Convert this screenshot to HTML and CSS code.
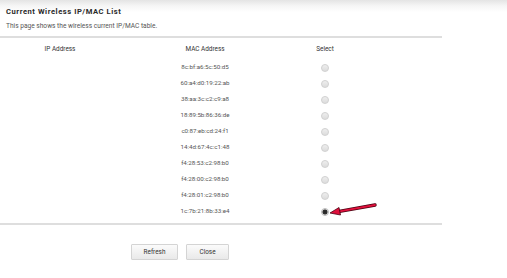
FILE: index.html
```html
<!DOCTYPE html>
<html lang="en">
<head>
    <meta charset="UTF-8">
    <title>Current Wireless IP/MAC List</title>
    <link rel="stylesheet" href="styles.css">
</head>
<body>

<div class="page-head">
    <h1>Current Wireless IP/MAC List</h1>
    <p>This page shows the wireless current IP/MAC table.</p>
</div>

<div class="content">
    <table class="mac-table">
        <colgroup>
            <col class="col-ip">
            <col class="col-mac">
            <col class="col-select">
        </colgroup>
        <thead>
            <tr>
                <th>IP Address</th>
                <th>MAC Address</th>
                <th>Select</th>
            </tr>
        </thead>
        <tbody>
            <tr><td></td><td>8c:bf:a6:5c:50:d5</td><td><input type="radio" name="sel" class="radio"></td></tr>
            <tr><td></td><td>60:a4:d0:19:22:ab</td><td><input type="radio" name="sel" class="radio"></td></tr>
            <tr><td></td><td>38:aa:3c:c2:c9:a8</td><td><input type="radio" name="sel" class="radio"></td></tr>
            <tr><td></td><td>18:89:5b:86:36:de</td><td><input type="radio" name="sel" class="radio"></td></tr>
            <tr><td></td><td>c0:87:eb:cd:24:f1</td><td><input type="radio" name="sel" class="radio"></td></tr>
            <tr><td></td><td>14:4d:67:4c:c1:48</td><td><input type="radio" name="sel" class="radio"></td></tr>
            <tr><td></td><td>f4:28:53:c2:98:b0</td><td><input type="radio" name="sel" class="radio"></td></tr>
            <tr><td></td><td>f4:28:00:c2:98:b0</td><td><input type="radio" name="sel" class="radio"></td></tr>
            <tr><td></td><td>f4:28:01:c2:98:b0</td><td><input type="radio" name="sel" class="radio"></td></tr>
            <tr><td></td><td>1c:7b:21:8b:33:e4</td><td class="marked"><input type="radio" name="sel" class="radio" checked>
                <!-- annotation arrow -->
                <svg class="arrow" width="50" height="14" viewBox="0 0 50 14">
                    <line x1="47" y1="2" x2="10" y2="8.6" stroke="#4a0010" stroke-width="3.4" stroke-linecap="round"/>
                    <line x1="47" y1="2" x2="10" y2="8.6" stroke="#e0103c" stroke-width="1.8" stroke-linecap="round"/>
                    <polygon points="2,10 11,4.5 12.5,12" fill="#e0103c" stroke="#4a0010" stroke-width="0.8" stroke-linejoin="round"/>
                </svg>
            </td></tr>
        </tbody>
    </table>
</div>

<div class="actions">
    <button class="button btn-refresh">Refresh</button>
    <button class="button btn-close">Close</button>
</div>

</body>
</html>
```

FILE: styles.css
```css
body {
    margin: 0;
    padding: 0;
    background-color: #fff;
    font-family: Roboto, 'Liberation Sans', sans-serif;
    color: #444;
}

.page-head {
    background: linear-gradient(to bottom, #e4e4e4 0px, #f6f6f6 6px, #fff 12px);
    padding: 7px 6px 0 6px;
    height: 31px;
    box-sizing: border-box;
    width: 507px;
}

.page-head h1 {
    margin: 0;
    font-size: 7.6px;
    font-weight: bold;
    letter-spacing: 0.55px;
    color: #2a2a2a;
    line-height: 9px;
}

.page-head p {
    margin: 6px 0 0 0;
    font-size: 6.6px;
    color: #555;
    line-height: 8px;
}

.content {
    width: 442px;
    margin-top: 5px;
    border-top: 2px solid #dedede;
    border-bottom: 2px solid #dedede;
    padding-bottom: 4px;
}

.mac-table {
    border-collapse: collapse;
    width: 360px;
    table-layout: fixed;
}

.col-ip { width: 120px; }
.col-mac { width: 170px; }
.col-select { width: 70px; }

.mac-table th {
    height: 21px;
    padding: 0;
    font-size: 6.4px;
    font-weight: normal;
    color: #333;
    text-align: center;
}

.mac-table td {
    height: 16px;
    padding: 0;
    font-size: 6.2px;
    color: #555;
    text-align: center;
    vertical-align: middle;
}

.radio {
    appearance: none;
    -webkit-appearance: none;
    margin: 0;
    width: 8px;
    height: 8px;
    border-radius: 50%;
    border: 1px solid #d2d2d2;
    background: linear-gradient(to bottom, #eeeeee, #dcdcdc);
    box-sizing: border-box;
    vertical-align: middle;
    position: relative;
    top: 1px;
}

.radio:checked {
    background: radial-gradient(circle, #222 0, #333 2.2px, #c8c8c8 2.8px, #dedede 4px);
    border-color: #c4c4c4;
}

.marked {
    position: relative;
}

.arrow {
    position: absolute;
    left: 38px;
    top: 0px;
}

.actions {
    padding: 19px 0 0 131px;
    display: flex;
    gap: 8px;
}

.button {
    height: 16px;
    padding: 0;
    border: 1px solid #d4d4d4;
    border-radius: 1px;
    background: linear-gradient(to bottom, #fbfbfb, #e9e9e9);
    font-family: Roboto, 'Liberation Sans', sans-serif;
    font-size: 6.4px;
    color: #333;
    cursor: pointer;
}

.btn-refresh { width: 47px; }
.btn-close { width: 43px; }
```
